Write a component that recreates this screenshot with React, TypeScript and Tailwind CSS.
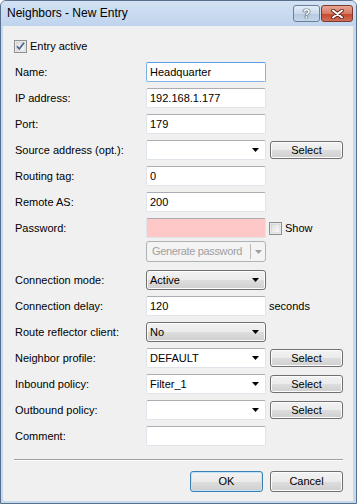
import React from "react";

const btnBg =
  "bg-[linear-gradient(to_bottom,#f2f2f2_0%,#ebebeb_50%,#dddddd_51%,#cfcfcf_100%)]";

function Check({ checked }: { checked?: boolean }) {
  return (
    <svg width="13" height="13" viewBox="0 0 13 13" className="shrink-0">
      <defs>
        <linearGradient id="cbg" x1="0" y1="0" x2="1" y2="1">
          <stop offset="0" stopColor="#dcdcdc" />
          <stop offset="1" stopColor="#fbfbfb" />
        </linearGradient>
      </defs>
      <rect x="0.5" y="0.5" width="12" height="12" fill="#f6f6f6" stroke="#8e8f8f" />
      <rect x="2" y="2" width="9" height="9" fill="url(#cbg)" stroke="#c4c4c4" strokeWidth="0.6" />
      {checked && (
        <path d="M3 6.2 L5.3 9 L10 2.8" fill="none" stroke="#4a5f97" strokeWidth="1.7" />
      )}
    </svg>
  );
}

function Arrow({ color = "#000" }: { color?: string }) {
  return (
    <svg width="7" height="4" viewBox="0 0 7 4" className="shrink-0">
      <polygon points="0,0 7,0 3.5,4" fill={color} />
    </svg>
  );
}

function TextBox({
  value,
  focused,
  pink,
}: {
  value?: string;
  focused?: boolean;
  pink?: boolean;
}) {
  return (
    <div
      className={
        "h-[20px] w-[120px] shrink-0 flex items-center px-[3px] rounded-[2px] border " +
        (focused
          ? "border-[#7eb4ea] border-t-[#569de5] "
          : "border-[#dfe3ea] border-t-[#abadb3] ") +
        (pink ? "bg-[#ffc8c8]" : "bg-white")
      }
    >
      {value}
    </div>
  );
}

function Combo({ value }: { value?: string }) {
  return (
    <div className="h-[20px] w-[120px] shrink-0 flex items-center pl-[3px] pr-[6px] rounded-[2px] border border-[#dfe3ea] border-t-[#abadb3] bg-white">
      <span className="flex-1">{value}</span>
      <Arrow />
    </div>
  );
}

function DropList({ value }: { value: string }) {
  return (
    <div
      className={
        "h-[20px] w-[120px] shrink-0 flex items-center pl-[3px] pr-[6px] rounded-[3px] border border-[#707070] shadow-[inset_0_0_0_1px_#fcfcfc] " +
        btnBg
      }
    >
      <span className="flex-1">{value}</span>
      <Arrow />
    </div>
  );
}

function Button({
  label,
  def,
  h = "h-[18px]",
}: {
  label: string;
  def?: boolean;
  h?: string;
}) {
  return (
    <div
      className={
        "w-[73px] shrink-0 flex items-center justify-center rounded-[3px] border " +
        h +
        " " +
        (def
          ? "border-[#3c7fb1] shadow-[inset_0_0_0_1px_#bfe3f8] "
          : "border-[#707070] shadow-[inset_0_0_0_1px_#fcfcfc] ") +
        btnBg
      }
    >
      {label}
    </div>
  );
}

function Row({
  label,
  children,
  className = "",
}: {
  label?: string;
  children: React.ReactNode;
  className?: string;
}) {
  return (
    <div className={"flex items-center h-[20px] pl-[12px] " + className}>
      <div className="w-[131px] shrink-0">{label}</div>
      {children}
    </div>
  );
}

export default function App() {
  return (
    <div className="w-[357px] h-[504px] flex flex-col bg-[#c4d8ee] border border-[#58708c] rounded-t-[6px] overflow-hidden font-['Liberation_Sans',Arial,sans-serif] text-[11px] text-black leading-none">
      {/* Title bar */}
      <div className="h-[25px] shrink-0 flex items-start bg-[linear-gradient(to_bottom,#d3e2f4_0%,#bfd4ed_100%)]">
        <div className="pl-[6px] pt-[6px] text-[12px] text-black">Neighbors - New Entry</div>
        <div className="ml-auto mr-[3px] mt-[4px] flex gap-[1px]">
          <div className="w-[27px] h-[17px] rounded-[3px] border border-[#6d7f96] bg-[linear-gradient(to_bottom,#e4edf8_0%,#cbd9ea_50%,#b5c8df_51%,#c5d6ea_100%)] flex items-center justify-center">
            <span className="text-white font-bold text-[13px] [text-shadow:0_0_1px_#283c59,0_0_1px_#283c59,0_0_1px_#283c59]">
              ?
            </span>
          </div>
          <div className="w-[32px] h-[17px] rounded-[3px] border border-[#7a3a2e] bg-[linear-gradient(to_bottom,#e8a693_0%,#d77a63_50%,#c3452a_51%,#d2705a_100%)] flex items-center justify-center">
            <svg width="13" height="10" viewBox="0 0 13 10">
              <path d="M2 1.5 L11 8.5 M11 1.5 L2 8.5" stroke="#5a1f15" strokeWidth="3.6" strokeLinecap="round" />
              <path d="M2 1.5 L11 8.5 M11 1.5 L2 8.5" stroke="#ffffff" strokeWidth="2" strokeLinecap="round" />
            </svg>
          </div>
        </div>
      </div>

      {/* Client */}
      <div className="flex-1 ml-[2px] mr-[3px] mb-[2px] bg-[#f0f0f0] flex flex-col">
        <div className="mt-[14px] pl-[11px] flex items-center h-[13px] gap-[3px]">
          <Check checked />
          <span>Entry active</span>
        </div>

        <div className="flex flex-col gap-[6px] mt-[9px]">
          <Row label="Name:">
            <TextBox value="Headquarter" focused />
          </Row>
          <Row label="IP address:">
            <TextBox value="192.168.1.177" />
          </Row>
          <Row label="Port:">
            <TextBox value="179" />
          </Row>
          <Row label="Source address (opt.):">
            <Combo />
            <div className="ml-[4px]">
              <Button label="Select" />
            </div>
          </Row>
          <Row label="Routing tag:">
            <TextBox value="0" />
          </Row>
          <Row label="Remote AS:">
            <TextBox value="200" />
          </Row>
          <Row label="Password:">
            <TextBox pink />
            <div className="ml-[3px] flex items-center gap-[3px]">
              <Check />
              <span>Show</span>
            </div>
          </Row>
        </div>

        <div className="mt-[3px] pl-[143px] flex">
          <div className="h-[21px] w-[120px] flex items-center rounded-[3px] border border-[#adb2b5] bg-[#f4f4f4] text-[#a0a0a0]">
            <span className="pl-[5px] flex-1 whitespace-nowrap tracking-[-0.35px]">Generate password</span>
            <div className="w-px h-[15px] bg-[#b8b8b8]" />
            <div className="w-[14px] flex justify-center">
              <Arrow color="#a0a0a0" />
            </div>
          </div>
        </div>

        <div className="flex flex-col gap-[6px] mt-[8px]">
          <Row label="Connection mode:">
            <DropList value="Active" />
          </Row>
          <Row label="Connection delay:">
            <TextBox value="120" />
            <span className="ml-[3px]">seconds</span>
          </Row>
          <Row label="Route reflector client:">
            <DropList value="No" />
          </Row>
          <Row label="Neighbor profile:">
            <Combo value="DEFAULT" />
            <div className="ml-[4px]">
              <Button label="Select" />
            </div>
          </Row>
          <Row label="Inbound policy:">
            <Combo value="Filter_1" />
            <div className="ml-[4px]">
              <Button label="Select" />
            </div>
          </Row>
          <Row label="Outbound policy:">
            <Combo />
            <div className="ml-[4px]">
              <Button label="Select" />
            </div>
          </Row>
          <Row label="Comment:">
            <TextBox />
          </Row>
        </div>

        <div className="mt-[13px] ml-[11px] mr-[10px] h-[2px] border-t border-t-[#a0a0a0] border-b border-b-white" />

        <div className="mt-[10px] flex justify-end gap-[7px] pr-[10px]">
          <Button label="OK" def h="h-[21px]" />
          <Button label="Cancel" h="h-[21px]" />
        </div>
      </div>
    </div>
  );
}
